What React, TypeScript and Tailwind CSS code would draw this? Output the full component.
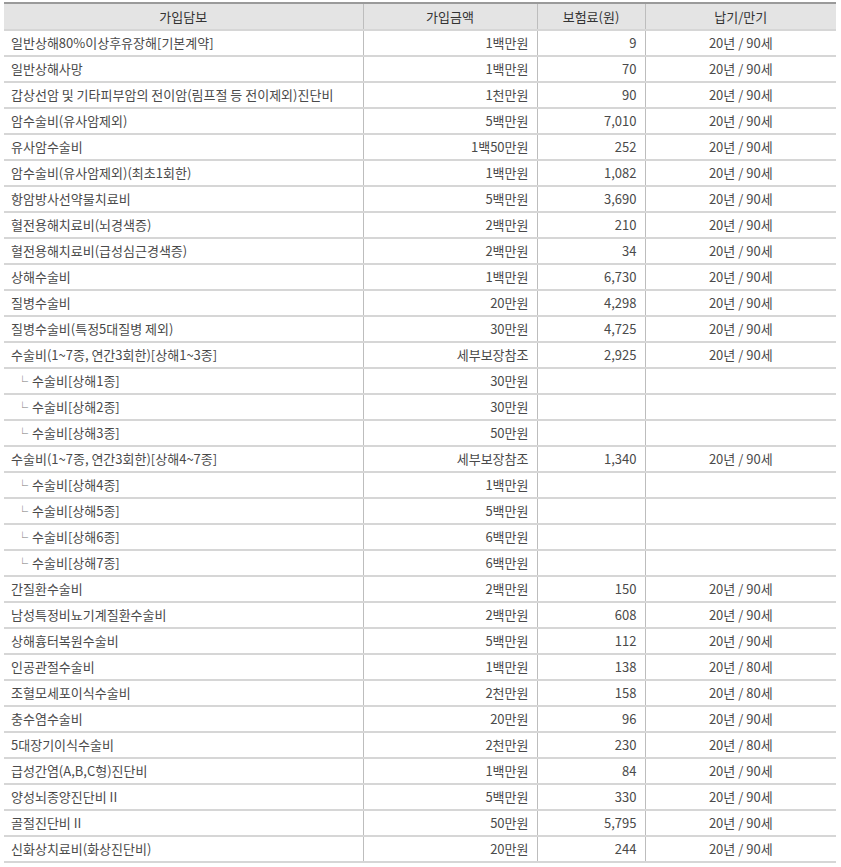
import React from 'react';

type Row = {
  name: string;
  amount: string;
  premium?: string;
  term?: string;
  sub?: boolean;
};

const T90 = '20년 / 90세';
const T80 = '20년 / 80세';

const rows: Row[] = [
  { name: '일반상해80%이상후유장해[기본계약]', amount: '1백만원', premium: '9', term: T90 },
  { name: '일반상해사망', amount: '1백만원', premium: '70', term: T90 },
  { name: '갑상선암 및 기타피부암의 전이암(림프절 등 전이제외)진단비', amount: '1천만원', premium: '90', term: T90 },
  { name: '암수술비(유사암제외)', amount: '5백만원', premium: '7,010', term: T90 },
  { name: '유사암수술비', amount: '1백50만원', premium: '252', term: T90 },
  { name: '암수술비(유사암제외)(최초1회한)', amount: '1백만원', premium: '1,082', term: T90 },
  { name: '항암방사선약물치료비', amount: '5백만원', premium: '3,690', term: T90 },
  { name: '혈전용해치료비(뇌경색증)', amount: '2백만원', premium: '210', term: T90 },
  { name: '혈전용해치료비(급성심근경색증)', amount: '2백만원', premium: '34', term: T90 },
  { name: '상해수술비', amount: '1백만원', premium: '6,730', term: T90 },
  { name: '질병수술비', amount: '20만원', premium: '4,298', term: T90 },
  { name: '질병수술비(특정5대질병 제외)', amount: '30만원', premium: '4,725', term: T90 },
  { name: '수술비(1~7종, 연간3회한)[상해1~3종]', amount: '세부보장참조', premium: '2,925', term: T90 },
  { name: '수술비[상해1종]', amount: '30만원', sub: true },
  { name: '수술비[상해2종]', amount: '30만원', sub: true },
  { name: '수술비[상해3종]', amount: '50만원', sub: true },
  { name: '수술비(1~7종, 연간3회한)[상해4~7종]', amount: '세부보장참조', premium: '1,340', term: T90 },
  { name: '수술비[상해4종]', amount: '1백만원', sub: true },
  { name: '수술비[상해5종]', amount: '5백만원', sub: true },
  { name: '수술비[상해6종]', amount: '6백만원', sub: true },
  { name: '수술비[상해7종]', amount: '6백만원', sub: true },
  { name: '간질환수술비', amount: '2백만원', premium: '150', term: T90 },
  { name: '남성특정비뇨기계질환수술비', amount: '2백만원', premium: '608', term: T90 },
  { name: '상해흉터복원수술비', amount: '5백만원', premium: '112', term: T90 },
  { name: '인공관절수술비', amount: '1백만원', premium: '138', term: T80 },
  { name: '조혈모세포이식수술비', amount: '2천만원', premium: '158', term: T80 },
  { name: '충수염수술비', amount: '20만원', premium: '96', term: T90 },
  { name: '5대장기이식수술비', amount: '2천만원', premium: '230', term: T80 },
  { name: '급성간염(A,B,C형)진단비', amount: '1백만원', premium: '84', term: T90 },
  { name: '양성뇌종양진단비 II', amount: '5백만원', premium: '330', term: T90 },
  { name: '골절진단비 II', amount: '50만원', premium: '5,795', term: T90 },
  { name: '신화상치료비(화상진단비)', amount: '20만원', premium: '244', term: T90 },
];

export default function App() {
  return (
    <div className="w-[841px] h-[867px] bg-white pt-[2px] pl-[4px] font-['Noto_Sans_CJK_KR',sans-serif] text-[13px] text-[#4a4a4a]">
      <table className="w-[832px] table-fixed border-collapse">
        <colgroup>
          <col className="w-[359px]" />
          <col className="w-[174px]" />
          <col className="w-[108px]" />
          <col className="w-[191px]" />
        </colgroup>
        <thead>
          <tr className="h-[27px] bg-[#e4e4e4] text-[#333] border-t-2 border-[#9a9a9a]">
            <th className="font-normal text-center border-r border-[#bdbdbd]">가입담보</th>
            <th className="font-normal text-center border-r border-[#bdbdbd]">가입금액</th>
            <th className="font-normal text-center border-r border-[#bdbdbd]">보험료(원)</th>
            <th className="font-normal text-center">납기/만기</th>
          </tr>
        </thead>
        <tbody>
          {rows.map((r, i) => (
            <tr key={i} className="h-[26px] border-t-2 border-[#d6d6d6]">
              <td className="pl-[7px] border-r border-[#bdbdbd] whitespace-nowrap">
                {r.sub ? (
                  <span className="pl-[6px]">
                    <span className="text-[11px] text-[#777] mr-[4px]">└</span>
                    {r.name}
                  </span>
                ) : (
                  r.name
                )}
              </td>
              <td className="pr-[8px] text-right border-r border-[#bdbdbd]">{r.amount}</td>
              <td className="pr-[8px] text-right border-r border-[#bdbdbd]">{r.premium ?? ''}</td>
              <td className="text-center">{r.term ?? ''}</td>
            </tr>
          ))}
          <tr className="border-t-2 border-[#d6d6d6]"><td colSpan={4} /></tr>
        </tbody>
      </table>
    </div>
  );
}
